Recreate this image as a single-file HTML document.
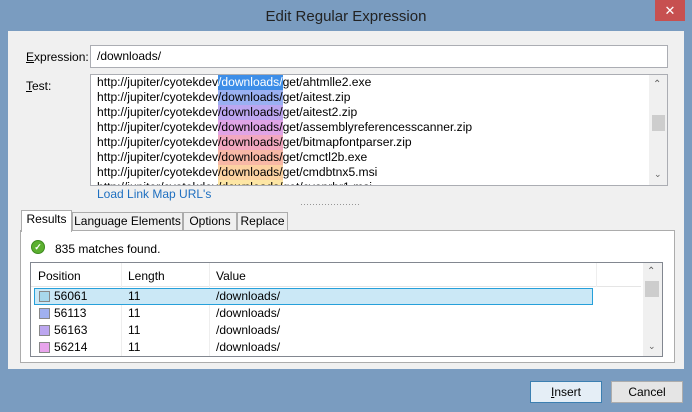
<!DOCTYPE html>
<html><head><style>
*{margin:0;padding:0;box-sizing:border-box}
body{width:692px;height:412px;background:#7a9cc0;font-family:"Liberation Sans",sans-serif;font-size:12px;color:#000;position:relative;overflow:hidden}
.a{position:absolute}
.title{left:0;top:8px;width:692px;text-align:center;font-size:15px;color:#222}
.close{left:655px;top:0;width:30px;height:21px;background:#c75050;color:#fff;text-align:center;font-size:13px;line-height:21px}
.panel{left:8px;top:31px;width:676px;height:338px;background:#f0f0f0}
.box{background:#fff;border:1px solid #abadb3}
.t{line-height:15px;white-space:nowrap;font-size:12.1px}
.t span{display:inline-block}
.tab{top:212px;height:19px;border:1px solid #acacac;background:#f0f0f0;text-align:center;line-height:17px;font-size:12px}
.row{left:3px;width:560px;height:17px;line-height:17px;font-size:12px}
.sw{position:absolute;left:5px;top:3px;width:11px;height:11px;border:1px solid #888}
.btn{top:381px;height:22px;border:1px solid #adadad;background:#e5e5e5;text-align:center;line-height:20px;font-size:12px}
</style></head><body>
<div class="a title">Edit Regular Expression</div>
<div class="a close">✕</div>
<div class="a panel"></div>
<div class="a" style="left:26px;top:50px"><u>E</u>xpression:</div>
<div class="a box" style="left:90px;top:45px;width:578px;height:23px;padding:3px 6px">/downloads/</div>
<div class="a" style="left:26px;top:79px"><u>T</u>est:</div>
<div class="a box" style="left:90px;top:74px;width:578px;height:112px;overflow:hidden">
<div class="a t" style="left:6px;top:0px">
http://jupiter/cyotekdev<span style="background:#3d8ee8;color:#fff">/downloads/</span>get/ahtmlle2.exe<br>
http://jupiter/cyotekdev<span style="background:#9ab0f2">/downloads/</span>get/aitest.zip<br>
http://jupiter/cyotekdev<span style="background:#bca6f0">/downloads/</span>get/aitest2.zip<br>
http://jupiter/cyotekdev<span style="background:#e0a4e6">/downloads/</span>get/assemblyreferencesscanner.zip<br>
http://jupiter/cyotekdev<span style="background:#f2a8c0">/downloads/</span>get/bitmapfontparser.zip<br>
http://jupiter/cyotekdev<span style="background:#f8b8a6">/downloads/</span>get/cmctl2b.exe<br>
http://jupiter/cyotekdev<span style="background:#fcd2a2">/downloads/</span>get/cmdbtnx5.msi<br>
http://jupiter/cyotekdev<span style="background:#fde6a4">/downloads/</span>get/cyoprbr1.msi<br>
http://jupiter/cyotekdev<span style="background:#fdf0a8">/downloads/</span>get/cyoprbr1.msi</div>
<div class="a" style="left:558px;top:0;width:19px;height:110px;background:#f0f0f0"></div>
<div class="a" style="left:562px;top:4px;font-size:10px;color:#606060">&#8963;</div>
<div class="a" style="left:561px;top:40px;width:13px;height:16px;background:#cdcdcd"></div>
<div class="a" style="left:563px;top:94px;font-size:9px;color:#606060">&#8964;</div>
</div>
<div class="a" style="left:97px;top:187px;color:#1e6fc0;font-size:12px">Load Link Map URL's</div>
<div class="a" style="left:300px;top:199px;color:#888;font-size:9px">····················</div>
<div class="a" style="left:20px;top:230px;width:655px;height:133px;background:#fff;border:1px solid #acacac"></div>
<div class="a tab" style="left:21px;top:210px;width:51px;height:22px;background:#fff;border-bottom:none">Results</div>
<div class="a tab" style="left:72px;width:111px">Language Elements</div>
<div class="a tab" style="left:183px;width:54px">Options</div>
<div class="a tab" style="left:237px;width:51px">Replace</div>
<div class="a" style="left:31px;top:240px;width:14px;height:14px;border-radius:50%;background:#5cb030;border:1px solid #3d8a1f;color:#fff;font-size:9px;text-align:center;line-height:12px;font-weight:bold">✓</div>
<div class="a" style="left:55px;top:242px;font-size:12px">835 matches found.</div>
<div class="a" style="left:30px;top:262px;width:633px;height:95px;border:1px solid #828790;background:#fff">
<div class="a" style="left:0;top:0;width:610px;height:24px;border-bottom:1px solid #e5e5e5"></div>
<div class="a" style="left:90px;top:0;width:1px;height:93px;background:#eee"></div>
<div class="a" style="left:178px;top:0;width:1px;height:93px;background:#eee"></div>
<div class="a" style="left:565px;top:0;width:1px;height:24px;background:#eee"></div>
<div class="a" style="left:7px;top:6px">Position</div>
<div class="a" style="left:97px;top:6px">Length</div>
<div class="a" style="left:185px;top:6px">Value</div>
<div class="a row" style="top:25px;background:#cbe8f6;border:1px solid #26a0da;width:559px"></div>
<div class="a row" style="top:25px"><span class="sw" style="background:#a8d8ec"></span><span class="a" style="left:20px">56061</span><span class="a" style="left:94px">11</span><span class="a" style="left:182px">/downloads/</span></div>
<div class="a row" style="top:42px"><span class="sw" style="background:#a0b0f0"></span><span class="a" style="left:20px">56113</span><span class="a" style="left:94px">11</span><span class="a" style="left:182px">/downloads/</span></div>
<div class="a row" style="top:59px"><span class="sw" style="background:#bca6f0"></span><span class="a" style="left:20px">56163</span><span class="a" style="left:94px">11</span><span class="a" style="left:182px">/downloads/</span></div>
<div class="a row" style="top:76px"><span class="sw" style="background:#e8a4ec"></span><span class="a" style="left:20px">56214</span><span class="a" style="left:94px">11</span><span class="a" style="left:182px">/downloads/</span></div>
<div class="a" style="left:612px;top:0;width:19px;height:93px;background:#f0f0f0"></div>
<div class="a" style="left:616px;top:3px;font-size:10px;color:#606060">&#8963;</div>
<div class="a" style="left:614px;top:18px;width:14px;height:16px;background:#cdcdcd"></div>
<div class="a" style="left:617px;top:78px;font-size:9px;color:#606060">&#8964;</div>
</div>
<div class="a btn" style="left:530px;width:72px;border-color:#3c7fb1;background:#e5eef6"><u>I</u>nsert</div>
<div class="a btn" style="left:611px;width:72px">Cancel</div>
</body></html>
